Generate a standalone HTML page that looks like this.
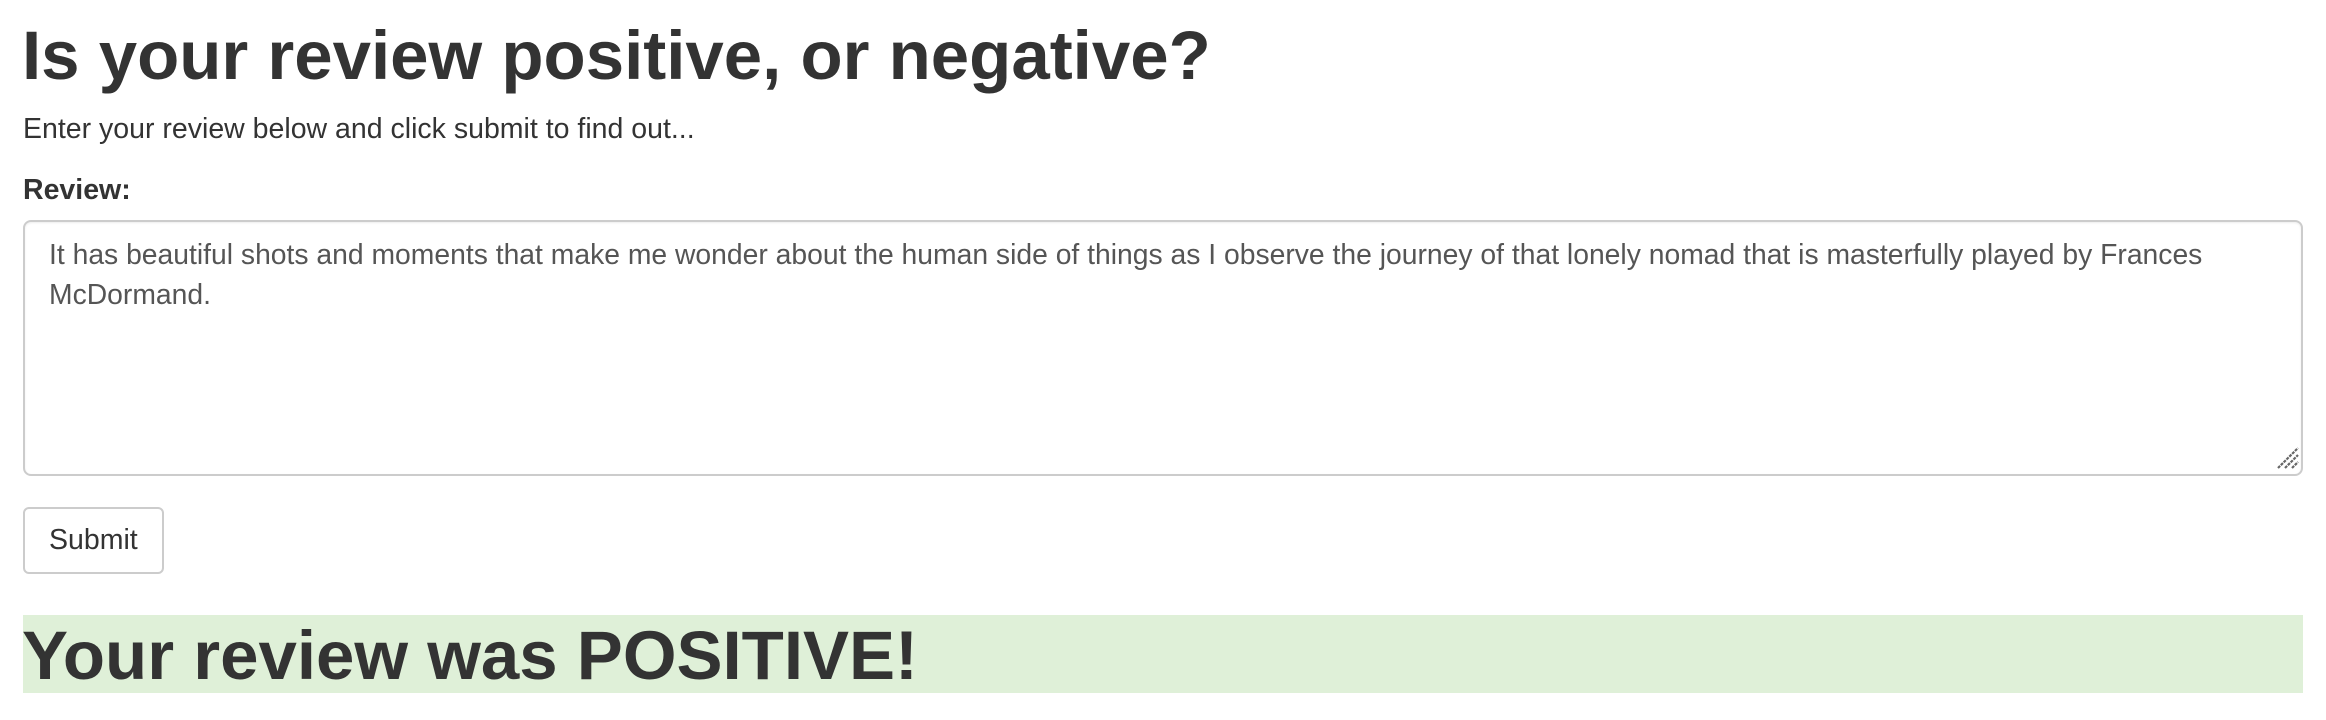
<!DOCTYPE html>
<html><head><meta charset="utf-8"><style>
body{margin:0;width:2326px;height:720px;background:#fff;font-family:"Liberation Sans",Helvetica,Arial,sans-serif;color:#333;position:relative;overflow:hidden}
.a{position:absolute;white-space:nowrap}
h1{margin:0;font-size:69px;font-weight:bold;line-height:1}
</style></head><body>
<h1 class="a" style="left:22px;top:21px">Is your review positive, or negative?</h1>
<div class="a" style="left:23px;top:112px;font-size:28.5px;line-height:1.2">Enter your review below and click submit to find out...</div>
<div class="a" style="left:23px;top:173px;font-size:28.5px;font-weight:bold;line-height:1.2">Review:</div>
<div class="a" style="left:23px;top:220px;width:2276px;height:252px;border:2px solid #ccc;border-radius:8px;box-shadow:inset 0 1px 2px rgba(0,0,0,.075)"></div>
<div class="a" style="left:49px;top:234px;font-size:28.3px;line-height:40px;color:#555;white-space:normal;width:2200px">It has beautiful shots and moments that make me wonder about the human side of things as I observe the journey of that lonely nomad that is masterfully played by Frances McDormand.</div>
<svg class="a" style="left:2276px;top:446px" width="24" height="24"><g stroke="#666" stroke-width="2.2" stroke-dasharray="3 1"><line x1="2" y1="22" x2="22" y2="2"/><line x1="9" y1="22" x2="22" y2="9"/><line x1="16" y1="22" x2="22" y2="16"/></g></svg>
<div class="a" style="left:23px;top:507px;width:137px;height:63px;border:2px solid #ccc;border-radius:6px"></div>
<div class="a" style="left:49px;top:523px;font-size:28.5px;line-height:1.2;color:#333">Submit</div>
<div class="a" style="left:23px;top:615px;width:2280px;height:78px;background:#dff0d8"></div>
<h1 class="a" style="left:22px;top:621px">Your review was POSITIVE!</h1>
</body></html>
